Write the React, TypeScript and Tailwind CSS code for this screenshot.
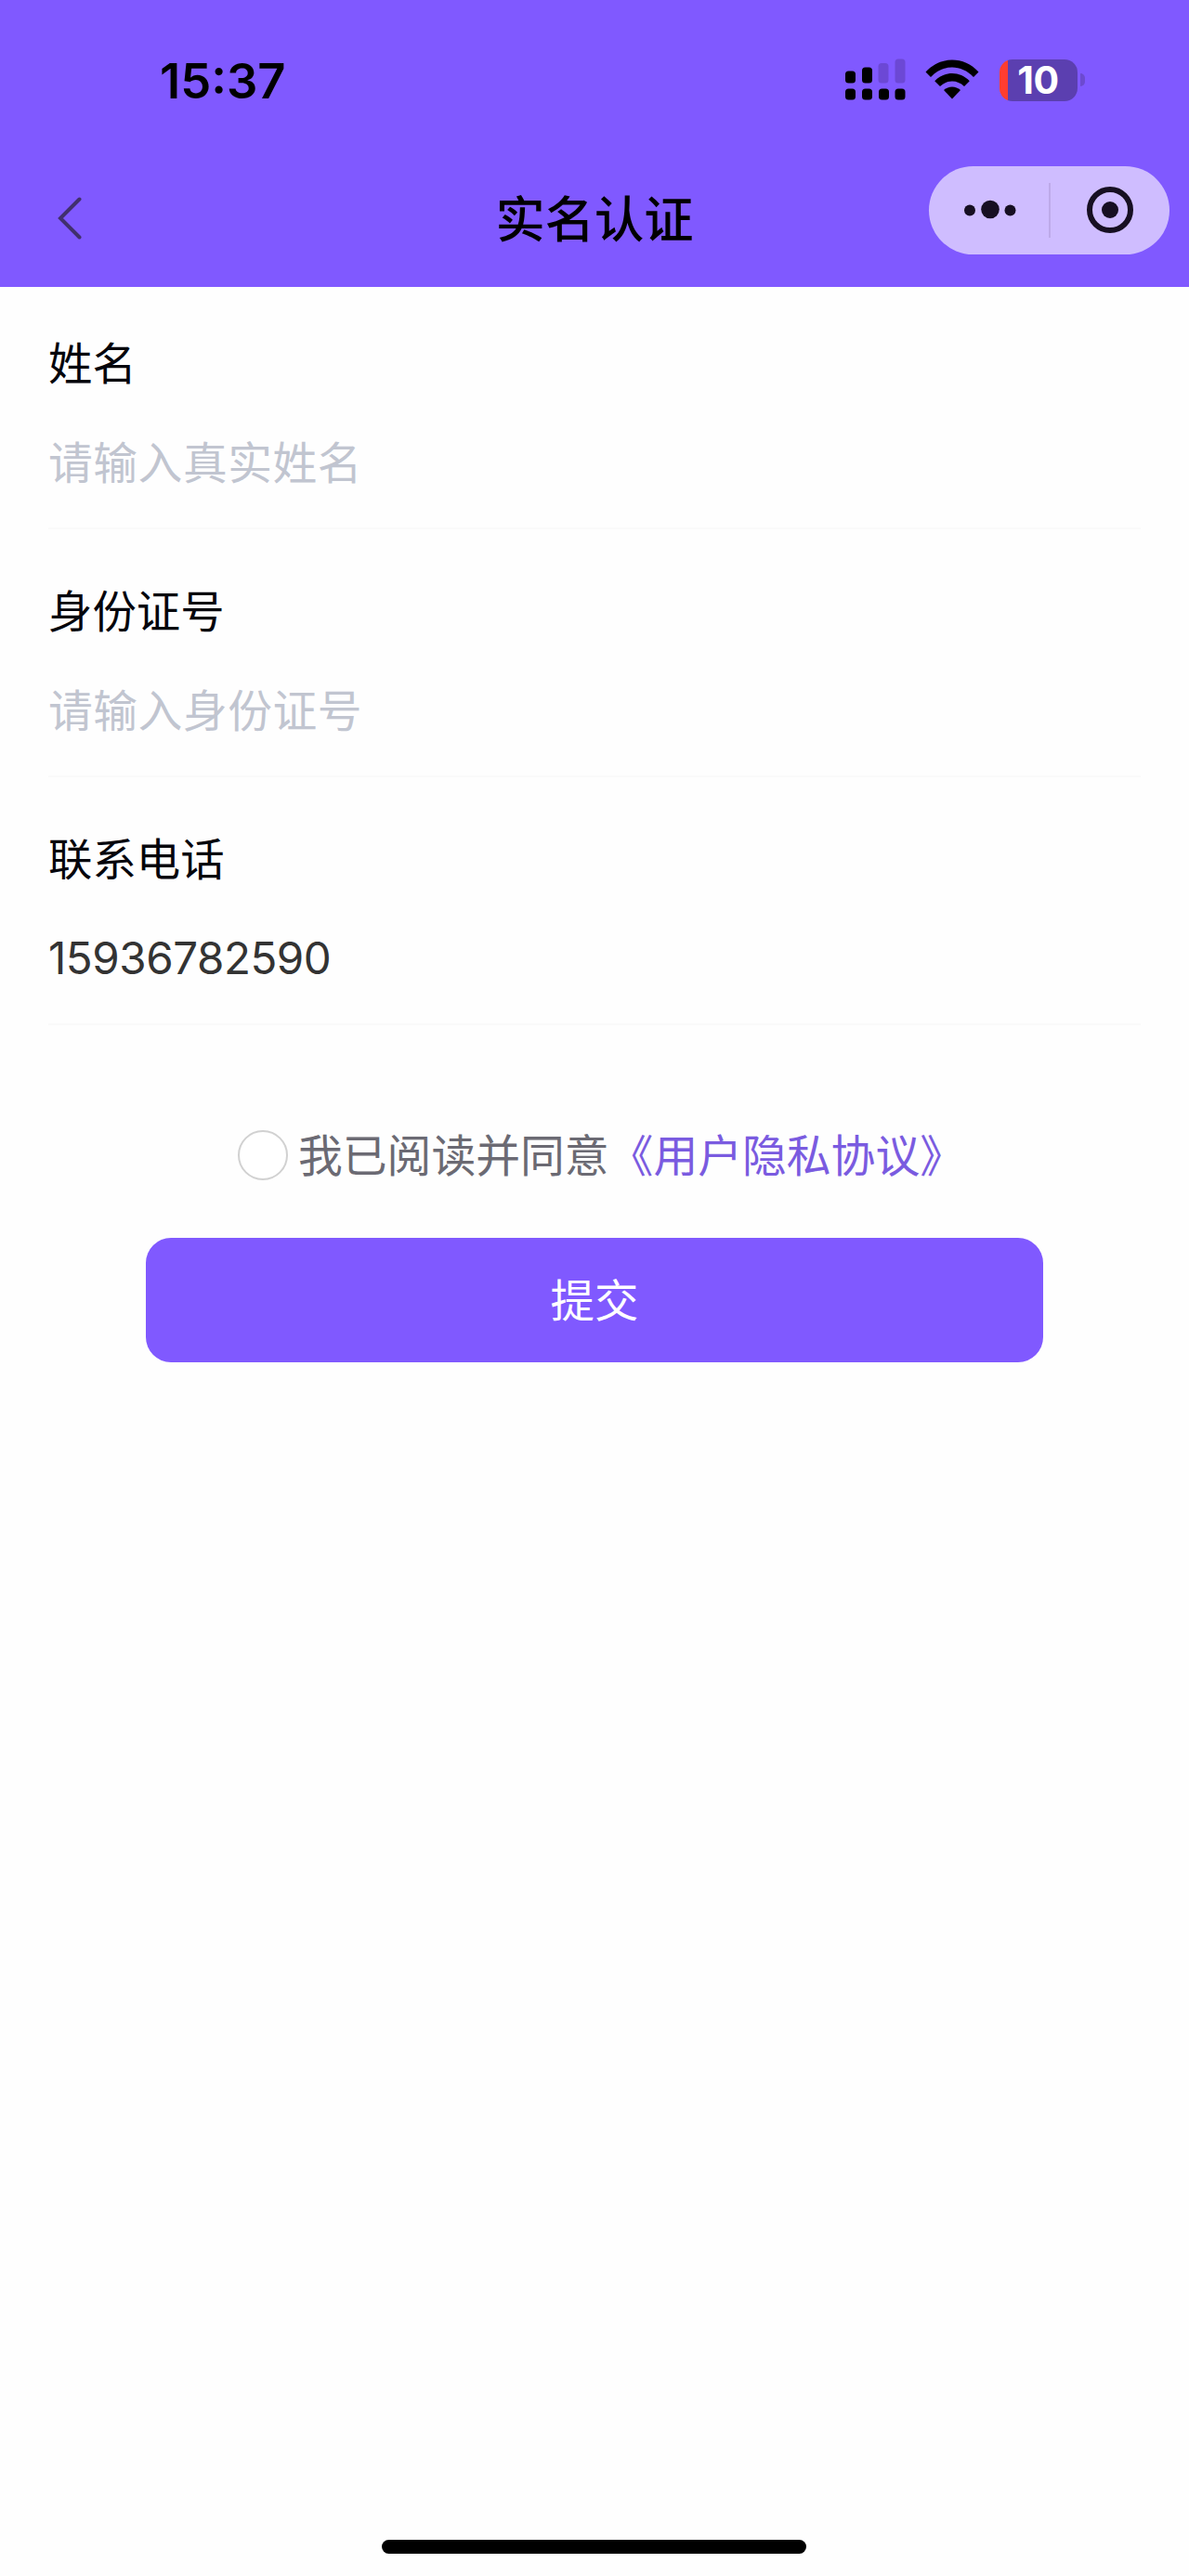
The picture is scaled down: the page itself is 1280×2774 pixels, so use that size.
import type { ReactNode } from "react";

function SignalIcon() {
  return (
    <svg width="66" height="46" viewBox="0 0 66 46">
      <rect x="1" y="13.5" width="11" height="13" rx="3.5" />
      <rect x="19" y="9.5" width="11" height="17" rx="3.5" />
      <rect x="36.5" y="5" width="11" height="21.5" rx="3.5" fill="#6c48d5" />
      <rect x="54.5" y="0.5" width="11" height="26" rx="3.5" fill="#6c48d5" />
      <rect x="1" y="32.5" width="11" height="12" rx="3.5" />
      <rect x="19" y="32.5" width="11" height="12" rx="3.5" />
      <rect x="37" y="32.5" width="11" height="12" rx="3.5" />
      <rect x="54.5" y="32.5" width="11" height="12" rx="3.5" />
    </svg>
  );
}

function WifiIcon() {
  return (
    <svg width="58" height="44" viewBox="0 0 58 44">
      <path d="M0.5 13.5C16-3.8 42-3.8 57.5 13.5L52 19C39 5 19 5 6 19Z" />
      <path d="M10.2 23.3C20.5 12.3 37.5 12.3 47.8 23.3L42 29C34.5 21.6 23.5 21.6 16 29Z" />
      <path d="M20 33C25 28.2 33 28.2 38 33L29 42.5Z" />
    </svg>
  );
}

function BatteryIcon() {
  return (
    <div className="flex items-center">
      <div className="flex h-[45px] w-[84px] rounded-[14px] bg-[linear-gradient(to_right,#ff3d30_9px,#5b3fb0_9px)]">
        <div className="w-full pr-[1px] text-center font-['Inter'] text-[41px] leading-[45px] font-bold tracking-[-0.5px] text-white">
          10
        </div>
      </div>
      <div className="ml-[3px] h-[14px] w-[5px] rounded-r-full bg-[#6c4ad0]" />
    </div>
  );
}

function Field({ label, children }: { label: string; children: ReactNode }) {
  return (
    <div className="h-[267px] pt-[52px]">
      <div className="h-[56px] text-[47.4px] leading-[56px] text-[#05050c]">{label}</div>
      <div className="mt-[51px] h-[56px] leading-[56px]">{children}</div>
      <div className="mt-[44px] h-[2px] bg-[#fafafa]" />
    </div>
  );
}

function Placeholder({ children }: { children: ReactNode }) {
  return <div className="text-[47.8px] tracking-[0.5px] text-[#c1c5d0]">{children}</div>;
}

export default function App() {
  return (
    <div className="flex h-[2774px] w-[1280px] flex-col bg-[#fefefe] font-['Noto_Sans_CJK_SC',sans-serif]">
      <header className="h-[309px] bg-[#8059ff]">
        <div className="flex h-[172px] items-center justify-between pr-[112px] pl-[172px] text-black">
          <div className="pt-[2px] font-['Inter'] text-[52.5px] leading-[60px] font-semibold">15:37</div>
          <div className="flex items-center">
            <SignalIcon />
            <div className="ml-[21px]">
              <WifiIcon />
            </div>
            <div className="ml-[22px]">
              <BatteryIcon />
            </div>
          </div>
        </div>
        <div className="grid h-[137px] grid-cols-[1fr_auto_1fr]">
          <div className="pt-[40px] pl-[61px]">
            <svg width="28" height="46" viewBox="0 0 28 46" fill="none" stroke="#41306d" strokeWidth="4" strokeLinecap="round">
              <path d="M24.5 2.5L4 23L24.5 43.5" />
            </svg>
          </div>
          <h1 className="pt-[29px] text-[53.3px] leading-[64px] font-medium text-black">实名认证</h1>
          <div className="flex justify-end pt-[6.5px] pr-[21px]">
            <div className="flex h-[95px] w-[259px] items-center rounded-full bg-[#cfbdff]">
              <svg width="259" height="95" viewBox="0 0 259 95" fill="#170f22">
                <circle cx="44" cy="47.5" r="6" />
                <circle cx="66" cy="46.5" r="9.8" />
                <circle cx="87.5" cy="47.5" r="6" />
                <rect x="129" y="18" width="2" height="59" fill="#bdaae9" />
                <circle cx="195" cy="47" r="22" fill="none" stroke="#170f22" strokeWidth="6" />
                <circle cx="195" cy="47" r="9" />
              </svg>
            </div>
          </div>
        </div>
      </header>

      <main className="flex flex-1 flex-col">
        <div className="px-[52px]">
          <Field label="姓名">
            <Placeholder>请输入真实姓名</Placeholder>
          </Field>
          <Field label="身份证号">
            <Placeholder>请输入身份证号</Placeholder>
          </Field>
          <Field label="联系电话">
            <div className="pt-[2px] font-['Inter'] text-[47.5px] tracking-[-0.45px] text-[#333333]">15936782590</div>
          </Field>
        </div>

        <div className="mt-[107px] flex h-[54px] items-center pl-[256px] text-[47.8px] leading-[54px] whitespace-nowrap">
          <div className="h-[54px] w-[54px] rounded-full border-2 border-[#d1d1d1] bg-white" />
          <span className="ml-[11px] pb-[4px] text-[#6b6a73]">我已阅读并同意</span>
          <span className="pb-[4px] text-[#7a5be0]">《用户隐私协议》</span>
        </div>

        <button className="mt-[62px] ml-[157px] h-[134px] w-[966px] rounded-[27px] bg-[#8059ff] pb-[5px] text-[47.4px] text-white">
          提交
        </button>
      </main>

      <footer className="flex h-[39px] pl-[410.5px]">
        <div className="h-[15px] w-[457px] rounded-full bg-black" />
      </footer>
    </div>
  );
}
